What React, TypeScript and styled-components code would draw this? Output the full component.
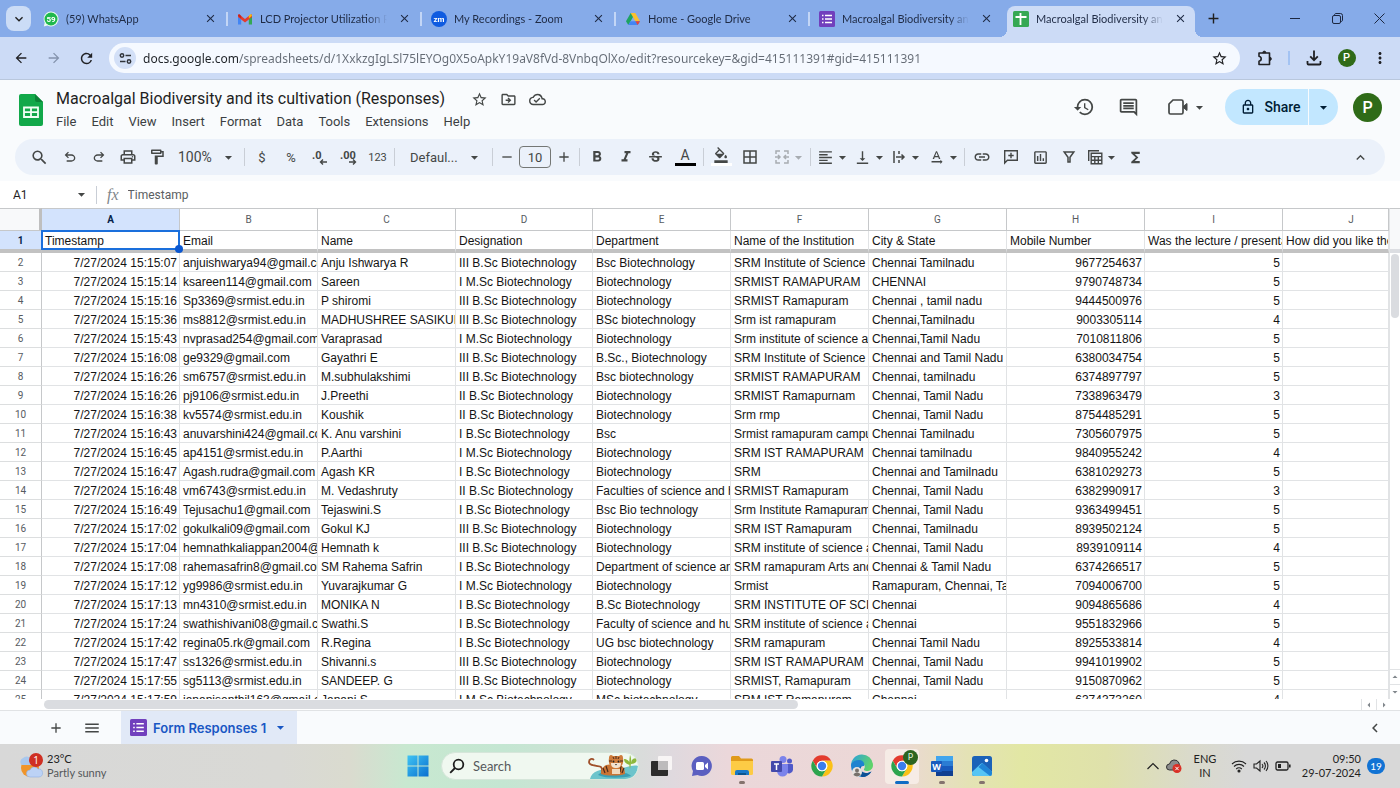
import React from 'react';
import styled, { createGlobalStyle } from 'styled-components';
import {
  MdAdd, MdArrowBack, MdArrowDropDown, MdArrowDropUp, MdArrowForward, MdArrowLeft, MdArrowRight, MdBorderAll,
  MdChevronLeft, MdClose, MdFormatAlignLeft, MdFormatBold, MdFormatColorFill, MdFormatItalic, MdFunctions,
  MdHistory, MdKeyboardArrowDown, MdKeyboardArrowUp, MdLink, MdMenu, MdMoreVert, MdOutlineCloudDone,
  MdOutlineComment, MdOutlineDriveFileMove,
  MdOutlineFormatPaint, MdOutlineInsertChart, MdOutlineLock, MdOutlinePrint, MdRefresh, MdRemove, MdSearch,
  MdStarBorder, MdStrikethroughS, MdTextRotationNone, MdVerticalAlignBottom,
} from 'react-icons/md';

const ui = 'Lato, "Open Sans", sans-serif';
const google = 'Roboto, "Liberation Sans", sans-serif';
const cell = '"Liberation Sans", Arial, sans-serif';

const GlobalStyle = createGlobalStyle`
  * { box-sizing: border-box; }
  body { margin: 0; font-family: ${google}; color: #1f1f1f; background: #fff; }
  button, input, select { font: inherit; color: inherit; border: 0; padding: 0; margin: 0; background: none; outline: 0; }
  button { cursor: pointer; display: inline-flex; align-items: center; justify-content: center; }
  svg { display: block; flex: none; }
`;

/* ---------- data ---------- */

const columns: [string, string, number][] = [
  ['A', 'Timestamp', 138],
  ['B', 'Email', 138],
  ['C', 'Name', 138],
  ['D', 'Designation', 137],
  ['E', 'Department', 138],
  ['F', 'Name of the Institution', 138],
  ['G', 'City & State', 138],
  ['H', 'Mobile Number', 138],
  ['I', 'Was the lecture / presentation', 138],
];

const rows: string[][] = [
  ['15:15:07', 'anjuishwarya94@gmail.com', 'Anju Ishwarya R', 'III B.Sc Biotechnology', 'Bsc Biotechnology', 'SRM Institute of Science', 'Chennai Tamilnadu', '9677254637', '5'],
  ['15:15:14', 'ksareen114@gmail.com', 'Sareen', 'I M.Sc Biotechnology', 'Biotechnology', 'SRMIST RAMAPURAM', 'CHENNAI', '9790748734', '5'],
  ['15:15:16', 'Sp3369@srmist.edu.in', 'P shiromi', 'III B.Sc Biotechnology', 'Biotechnology', 'SRMIST Ramapuram', 'Chennai , tamil nadu', '9444500976', '5'],
  ['15:15:36', 'ms8812@srmist.edu.in', 'MADHUSHREE SASIKUMAR', 'III B.Sc Biotechnology', 'BSc biotechnology', 'Srm ist ramapuram', 'Chennai,Tamilnadu', '9003305114', '4'],
  ['15:15:43', 'nvprasad254@gmail.com', 'Varaprasad', 'I M.Sc Biotechnology', 'Biotechnology', 'Srm institute of science and', 'Chennai,Tamil Nadu', '7010811806', '5'],
  ['15:16:08', 'ge9329@gmail.com', 'Gayathri E', 'III B.Sc Biotechnology', 'B.Sc., Biotechnology', 'SRM Institute of Science', 'Chennai and Tamil Nadu', '6380034754', '5'],
  ['15:16:26', 'sm6757@srmist.edu.in', 'M.subhulakshimi', 'III B.Sc Biotechnology', 'Bsc biotechnology', 'SRMIST RAMAPURAM', 'Chennai, tamilnadu', '6374897797', '5'],
  ['15:16:26', 'pj9106@srmist.edu.in', 'J.Preethi', 'II B.Sc Biotechnology', 'Biotechnology', 'SRMIST Ramapurnam', 'Chennai, Tamil Nadu', '7338963479', '3'],
  ['15:16:38', 'kv5574@srmist.edu.in', 'Koushik', 'II B.Sc Biotechnology', 'Biotechnology', 'Srm rmp', 'Chennai, Tamil Nadu', '8754485291', '5'],
  ['15:16:43', 'anuvarshini424@gmail.com', 'K. Anu varshini', 'I B.Sc Biotechnology', 'Bsc', 'Srmist ramapuram campus', 'Chennai Tamilnadu', '7305607975', '5'],
  ['15:16:45', 'ap4151@srmist.edu.in', 'P.Aarthi', 'I M.Sc Biotechnology', 'Biotechnology', 'SRM IST RAMAPURAM', 'Chennai tamilnadu', '9840955242', '4'],
  ['15:16:47', 'Agash.rudra@gmail.com', 'Agash KR', 'I B.Sc Biotechnology', 'Biotechnology', 'SRM', 'Chennai and Tamilnadu', '6381029273', '5'],
  ['15:16:48', 'vm6743@srmist.edu.in', 'M. Vedashruty', 'II B.Sc Biotechnology', 'Faculties of science and h', 'SRMIST Ramapuram', 'Chennai, Tamil Nadu', '6382990917', '3'],
  ['15:16:49', 'Tejusachu1@gmail.com', 'Tejaswini.S', 'I B.Sc Biotechnology', 'Bsc Bio technology', 'Srm Institute Ramapuram', 'Chennai, Tamil Nadu', '9363499451', '5'],
  ['15:17:02', 'gokulkali09@gmail.com', 'Gokul KJ', 'III B.Sc Biotechnology', 'Biotechnology', 'SRM IST Ramapuram', 'Chennai, Tamilnadu', '8939502124', '5'],
  ['15:17:04', 'hemnathkaliappan2004@gmail', 'Hemnath k', 'III B.Sc Biotechnology', 'Biotechnology', 'SRM institute of science and', 'Chennai, Tamil Nadu', '8939109114', '4'],
  ['15:17:08', 'rahemasafrin8@gmail.com', 'SM Rahema Safrin', 'I B.Sc Biotechnology', 'Department of science and', 'SRM ramapuram Arts and', 'Chennai & Tamil Nadu', '6374266517', '5'],
  ['15:17:12', 'yg9986@srmist.edu.in', 'Yuvarajkumar G', 'I M.Sc Biotechnology', 'Biotechnology', 'Srmist', 'Ramapuram, Chennai, Tamil', '7094006700', '5'],
  ['15:17:13', 'mn4310@srmist.edu.in', 'MONIKA N', 'I B.Sc Biotechnology', 'B.Sc Biotechnology', 'SRM INSTITUTE OF SCI', 'Chennai', '9094865686', '4'],
  ['15:17:24', 'swathishivani08@gmail.com', 'Swathi.S', 'I B.Sc Biotechnology', 'Faculty of science and hum', 'SRM institute of science and', 'Chennai', '9551832966', '5'],
  ['15:17:42', 'regina05.rk@gmail.com', 'R.Regina', 'I B.Sc Biotechnology', 'UG bsc biotechnology', 'SRM ramapuram', 'Chennai Tamil Nadu', '8925533814', '4'],
  ['15:17:47', 'ss1326@srmist.edu.in', 'Shivanni.s', 'III B.Sc Biotechnology', 'Biotechnology', 'SRM IST RAMAPURAM', 'Chennai, Tamil Nadu', '9941019902', '5'],
  ['15:17:55', 'sg5113@srmist.edu.in', 'SANDEEP. G', 'III B.Sc Biotechnology', 'Biotechnology', 'SRMIST, Ramapuram', 'Chennai, Tamil Nadu', '9150870962', '5'],
  ['15:17:59', 'jananisenthil163@gmail.com', 'Janani S', 'I M.Sc Biotechnology', 'MSc biotechnology', 'SRM IST Ramapuram', 'Chennai', '6374373260', '4'],
];

/* ---------- icons ---------- */

const Symbol24 = ({ d, size = 16 }: { d: string; size?: number }) => (
  <svg width={size} height={size} viewBox="0 -960 960 960" fill="currentColor"><path d={d} /></svg>
);
const UndoIcon = () => <Symbol24 d="M280-200v-80h284q63 0 109.5-40T720-420q0-60-46.5-100T564-560H312l104 104-56 56-200-200 200-200 56 56-104 104h252q97 0 166.5 63T800-420q0 94-69.5 157T564-200H280Z" />;
const RedoIcon = () => <Symbol24 d="M396-200q-97 0-166.5-63T160-420q0-94 69.5-157T396-640h252L544-744l56-56 200 200-200 200-56-56 104-104H396q-63 0-109.5 40T240-420q0 60 46.5 100T396-280h284v80H396Z" />;

const Decimal = ({ text, right }: { text: string; right?: boolean }) => (
  <svg width="18" height="18" viewBox="0 0 18 18" fill="none" stroke="currentColor" strokeWidth="1.4">
    <text x={right ? 0 : 1} y="11" fontFamily="Roboto, sans-serif" fontSize="11" fontWeight="700" fill="currentColor" stroke="none">{text}</text>
    {right ? <path d="M9 14h6M13 11.500l2.500 2.500L13 16.500" /> : <path d="M16 14h-6M12 11.500L9.500 14l2.500 2.500" />}
  </svg>
);
const MergeIcon = () => (
  <svg width="16" height="16" viewBox="0 0 16 16" fill="none" stroke="currentColor" strokeWidth="1.500">
    <path d="M6 2H2v3M10 2h4v3M6 14H2v-3M10 14h4v-3M1 8h5M4 6l2 2-2 2M15 8h-5M12 6l-2 2 2 2" />
  </svg>
);
const WrapIcon = () => (
  <svg width="16" height="16" viewBox="0 0 16 16" fill="none" stroke="currentColor" strokeWidth="1.500">
    <path d="M3 2v12M8 2v3M8 11v3M5 8h8M10.500 5.500L13 8l-2.500 2.500" />
  </svg>
);
const AddCommentIcon = () => (
  <svg width="16" height="16" viewBox="0 0 16 16" fill="none" stroke="currentColor" strokeWidth="1.400">
    <path d="M1.700 14V1.700h12.600v9.600H4.400zM8 3.800v5.400M5.300 6.500h5.400" />
  </svg>
);
const FunnelIcon = () => (
  <svg width="16" height="16" viewBox="0 0 16 16" fill="none" stroke="currentColor" strokeWidth="1.500">
    <path d="M3.200 3h9.600L9 8.200V13H7V8.200z" />
  </svg>
);
const TableViewIcon = () => (
  <svg width="16" height="16" viewBox="0 0 16 16" fill="none" stroke="currentColor" strokeWidth="1.400">
    <path d="M1.700 12V1.700H12M4.200 4.200h10.600v10.600H4.200zM4.200 7.600h10.600M4.200 11.200h10.600M7.800 7.600v7.200M11.300 7.600v7.200" />
  </svg>
);
const CameraIcon = () => (
  <svg width="20" height="20" viewBox="0 0 20 20" fill="none" stroke="currentColor" strokeWidth="1.700">
    <path d="M5 3h8.500a1.500 1.500 0 0 1 1.500 1.500v11a1.500 1.500 0 0 1-1.500 1.500h-11A1.500 1.500 0 0 1 1 15.500V7z" />
    <path d="M15.500 9.200L19 6.500v7l-3.500-2.700z" fill="currentColor" strokeWidth="1" />
  </svg>
);
const PuzzleIcon = () => (
  <svg width="18" height="18" viewBox="0 0 18 18" fill="none" stroke="currentColor" strokeWidth="1.600" strokeLinejoin="round">
    <path d="M3 4h10.500v11.500H3v-3.300q2.200-.4 2.200-2.400T3 7.300z" />
    <path d="M6.700 3.700a1.600 1.600 0 0 1 3.200 0zM13.800 8.200a1.600 1.600 0 0 1 0 3.200z" fill="currentColor" strokeWidth=".8" />
  </svg>
);
const DownloadIcon = () => (
  <svg width="18" height="18" viewBox="0 0 18 18" fill="none" stroke="currentColor" strokeWidth="1.800">
    <path d="M9 1.500v9.500M5.200 7.400L9 11.200l3.800-3.800M2.500 12v2.500q0 1 1 1h11q1 0 1-1V12" />
  </svg>
);
const FormsIcon = ({ size }: { size: number }) => (
  <svg width={size} height={size} viewBox="0 0 16 16">
    <rect width="16" height="16" rx="1.500" fill="#7140bd" />
    <path d="M3 4.500h1.500M3 8h1.500M3 11.500h1.500M6 4.500h7M6 8h7M6 11.500h7" stroke="#fff" strokeWidth="1.500" />
  </svg>
);
const SheetsLogo = () => (
  <svg width="24" height="32" viewBox="0 0 24 32">
    <path d="M2 0h14l8 8v22a2 2 0 0 1-2 2H2a2 2 0 0 1-2-2V2a2 2 0 0 1 2-2z" fill="#12a84a" />
    <path d="M16 0l8 8h-6a2 2 0 0 1-2-2z" fill="#0c8238" />
    <path d="M5 13.500h14v9.500H5zM5 18.200h14M12 13.500V23" fill="none" stroke="#f2fff6" strokeWidth="1.800" />
  </svg>
);
const SheetsFavicon = () => (
  <svg width="16" height="16" viewBox="0 0 16 16">
    <rect width="16" height="16" rx="1.500" fill="#34a853" />
    <path d="M2.500 6h11M7.500 2v12" stroke="#fff" strokeWidth="1.800" />
  </svg>
);
const WhatsAppIcon = () => (
  <svg width="16" height="16" viewBox="0 0 16 16">
    <path d="M8 .5a7.500 7.500 0 1 1-3.500 14.100L.8 15.400l.9-3.600A7.500 7.500 0 0 1 8 .5z" fill="#e9fbef" />
    <circle cx="8" cy="8" r="6.500" fill="#1fb84c" />
    <text x="8" y="10.800" textAnchor="middle" fontFamily="Roboto, sans-serif" fontSize="8" fontWeight="700" fill="#fff">59</text>
  </svg>
);
const GmailIcon = () => (
  <svg width="16" height="16" viewBox="0 0 16 16">
    <path d="M1 4v9.500h3.200V6.500z" fill="#4285f4" />
    <path d="M15 4v9.500h-3.200V6.500z" fill="#34a853" />
    <path d="M1 3.200L4.200 5 8 8l3.800-3L15 3.200V6l-7 5.500L1 6z" fill="#e33b2e" />
    <path d="M11.800 5l1.600-1.700Q15 3 15 4.800l-3.200 2.700z" fill="#fbbc04" />
    <path d="M4.200 5L2.600 3.300Q1 3 1 4.800l3.200 2.700z" fill="#c5221f" />
  </svg>
);
const ZoomIcon = () => (
  <svg width="16" height="16" viewBox="0 0 16 16">
    <circle cx="8" cy="8" r="8" fill="#0f5be0" />
    <text x="8" y="10.500" textAnchor="middle" fontFamily="Roboto, sans-serif" fontSize="8" fontWeight="700" fill="#fff">zm</text>
  </svg>
);
const DriveIcon = () => (
  <svg width="16" height="14" viewBox="-1 0 16 14">
    <path d="M4.700 1h4.600L4.600 9.200 2.300 13 0 9.200z" fill="#1ea362" />
    <path d="M4.700 1h4.600L14 9.200H9.400z" fill="#fbc02d" />
    <path d="M4.600 9.200H14L11.700 13H2.300z" fill="#4285f4" />
    <path d="M9.400 9.200H14L11.700 13z" fill="#ea4335" />
  </svg>
);
const TuneIcon = () => (
  <svg width="13" height="13" viewBox="0 0 13 13" fill="none" stroke="#30343a" strokeWidth="1.500">
    <circle cx="3" cy="3.500" r="1.700" /><path d="M6.500 3.500H12M1 9.500h5.500" /><circle cx="10" cy="9.500" r="1.700" />
  </svg>
);
const RestoreIcon = () => (
  <svg width="11" height="11" viewBox="0 0 11 11" fill="none" stroke="currentColor" strokeWidth="1">
    <rect x=".5" y="2.500" width="8" height="8" rx="1.500" /><path d="M2.500 2.500C2.500 1 3 .5 4 .5h4.500a2 2 0 0 1 2 2V7c0 1-.5 1.500-2 1.500" />
  </svg>
);
const ThinCross = () => (
  <svg width="11" height="11" viewBox="0 0 11 11" stroke="currentColor" strokeWidth="1"><path d="M.5.5l10 10M10.500.5l-10 10" /></svg>
);

const WeatherIcon = () => (
  <svg width="26" height="28" viewBox="0 0 26 28">
    <circle cx="12" cy="16" r="9" fill="#f0952b" />
    <path d="M4 13a4 4 0 0 1 1-7 5 5 0 0 1 8 1v6z" fill="#a9c8ee" />
    <path d="M12 25a3.500 3.500 0 0 1 0-7 4.500 4.500 0 0 1 8-1 4 4 0 0 1 1 8z" fill="#bcd2f5" stroke="#8fb0e4" strokeWidth=".6" />
    <circle cx="18" cy="8" r="7" fill="#cf2f22" />
    <text x="18" y="12" textAnchor="middle" fontFamily="Open Sans, sans-serif" fontSize="10" fill="#fff">1</text>
  </svg>
);
const WindowsIcon = () => (
  <svg width="22" height="22" viewBox="0 0 22 22">
    <defs><linearGradient id="win" x1="0" y1="0" x2="1" y2="1"><stop offset="0" stopColor="#3fc4f3" /><stop offset="1" stopColor="#0a6fd0" /></linearGradient></defs>
    <path d="M.5.500h10v10h-10zM11.500.500h10v10h-10zM.5 11.500h10v10h-10zM11.500 11.500h10v10h-10z" fill="url(#win)" />
  </svg>
);
const TigerArt = () => (
  <svg width="50" height="26" viewBox="0 0 50 26">
    <path d="M2 26C4 18 12 16 24 16c14 0 20-5 26-3-1 8-5 13-12 13z" fill="#6cc4cb" />
    <path d="M10 22c4-4 8-3 12-2h14c4 0 6 2 7 3-8 2-24 3-33-1z" fill="#3a9fb4" />
    <path d="M14 20C15 11 10 14 7 12.500 4 12 1 12 1 9c0-3 3-4 5-2" fill="none" stroke="#a0512b" strokeWidth="1.800" />
    <path d="M13 21c0-8 6-11 12-9 8-2 12 2 12 9-6 2-18 2-24 0z" fill="#c97433" />
    <path d="M15 15l2 5M18 13l2 6M33 13l-1 6M36 15l-2 5" stroke="#4a2a1c" strokeWidth="1.200" />
    <path d="M21 5c0-3 2-4 4-2h6c2-2 4-1 4 2 1 5-1 10-7 11-6-1-8-6-7-11z" fill="#cf7c3c" />
    <path d="M23 10h10c0 4-2 5-5 5s-5-1-5-5z" fill="#f3e2cf" />
    <path d="M28 3v3M25 4l1 2M31 4l-1 2M21 8h3M35 8h-3" stroke="#4a2a1c" />
    <circle cx="25.500" cy="8.500" r=".9" fill="#222" /><circle cx="30.500" cy="8.500" r=".9" fill="#222" /><path d="M27 11h2l-1 1.500z" fill="#222" />
    <path d="M24 16h8v5h-8z" fill="#f0d9bd" />
    <path d="M42 16c-1-4-1-8 0-14 2 4 1 9 0 14zM42 12c-4-1-6-3-6-6 4 0 6 3 6 6zM43 11c0-4 2-6 6-6 0 4-2 6-6 6z" fill="#8db83c" />
  </svg>
);
const TaskViewIcon = () => (
  <svg width="24" height="24" viewBox="0 0 24 24">
    <rect x="8" y="2" width="14" height="14" rx="1" fill="#f8f5f5" />
    <rect x="1" y="7" width="17" height="15" rx="1" fill="#2c2c2c" />
    <path d="M8 7h10v9H8z" fill="#bdbbbc" />
  </svg>
);
const ChatIcon = () => (
  <svg width="22" height="22" viewBox="0 0 22 22">
    <path d="M11 1a10 10 0 1 1-4.500 19L1 21l1-5A10 10 0 0 1 11 1z" fill="#5b5fc0" />
    <rect x="5" y="7" width="8" height="8" rx="1.500" fill="#fff" /><path d="M14 10l3-2.500v7L14 12z" fill="#fff" />
  </svg>
);
const FolderIcon = () => (
  <svg width="24" height="22" viewBox="0 0 24 22">
    <path d="M1 2.500A1.500 1.500 0 0 1 2.500 1H9l2 2.500h10.500A1.500 1.500 0 0 1 23 5v5H1z" fill="#e09a1a" />
    <path d="M1 6h22v12.500a1.500 1.500 0 0 1-1.500 1.500h-19A1.500 1.500 0 0 1 1 18.500z" fill="#fdcb45" />
    <path d="M5 20v-3a2 2 0 0 1 2-2h10a2 2 0 0 1 2 2v3z" fill="#1a78c8" /><path d="M8 18h8v2H8z" fill="#0c558f" />
  </svg>
);
const TeamsIcon = () => (
  <svg width="24" height="22" viewBox="0 0 24 22">
    <circle cx="19.500" cy="6" r="2.500" fill="#5059c9" /><circle cx="13" cy="4.500" r="3.500" fill="#7b83eb" />
    <path d="M15 9h7a1 1 0 0 1 1 1v5a4 4 0 0 1-7 2z" fill="#5059c9" />
    <path d="M7 9h10a1 1 0 0 1 1 1v6a5.500 5.500 0 0 1-11 0z" fill="#7b83eb" />
    <rect x="1" y="6" width="11" height="11" rx="1" fill="#4349ab" /><path d="M4 9h5M6.500 9v6" stroke="#fff" strokeWidth="1.500" />
  </svg>
);
const ChromeLogo = () => {
  const arm = 'M12 6.700H21.200A10.600 10.600 0 0 0 2.800 6.700L7.400 14.650A5.300 5.300 0 0 1 12 6.700Z';
  return (
    <svg width="24" height="24" viewBox="0 0 24 24">
      <circle cx="12" cy="12" r="9" fill="#fff" />
      <path d={arm} fill="#e33b2e" />
      <path d={arm} fill="#fbc116" transform="rotate(120 12 12)" />
      <path d={arm} fill="#2da44e" transform="rotate(240 12 12)" />
      <circle cx="12" cy="12" r="5.300" fill="#fff" /><circle cx="12" cy="12" r="4.200" fill="#3b7ded" />
    </svg>
  );
};
const EdgeIcon = () => (
  <svg width="24" height="24" viewBox="0 0 24 24">
    <defs><linearGradient id="edge" x1="0" y1="0" x2="1" y2=".4"><stop offset="0" stopColor="#2a9fe0" /><stop offset="1" stopColor="#5fd36b" /></linearGradient></defs>
    <path d="M1 12a11 11 0 0 1 22-1c0 4-3 6-6.500 6-2 0-3-1-2.500-2 2-3 0-6-4-6-5 0-8 3-9 3z" fill="url(#edge)" />
    <path d="M1 12c0-4 4-6 8-6 4 0 6 3 5 6-4-1-5 6 1 7 3 .5 5-.5 6.500-1.500A11 11 0 0 1 1 12z" fill="#1d83d0" />
    <path d="M11 12c-2 4 1 7 5 7 2 0 4-.7 5.500-1.500A11 11 0 0 1 12 23c-4-2-5-9-1-11z" fill="#0d4f94" />
    <circle cx="7" cy="18" r="5" fill="#e6e3e0" /><circle cx="7" cy="16.500" r="2" fill="#77716c" /><path d="M3.500 21c0-3.500 7-3.500 7 0a5 5 0 0 1-7 0z" fill="#77716c" />
  </svg>
);
const WordIcon = () => (
  <svg width="24" height="22" viewBox="0 0 24 22">
    <rect x="6" y="1" width="17" height="20" rx="1.500" fill="#2b7cd3" /><path d="M6 1h17v5H6z" fill="#41a5ee" /><path d="M6 11h17v5H6z" fill="#185abd" /><path d="M6 16h17v5H6z" fill="#103f91" />
    <rect x="1" y="6" width="11" height="11" rx="1" fill="#185abd" />
    <text x="6.500" y="14.700" textAnchor="middle" fontFamily="Open Sans, sans-serif" fontSize="9" fontWeight="700" fill="#fff">W</text>
  </svg>
);
const PhotosIcon = () => (
  <svg width="22" height="22" viewBox="0 0 22 22">
    <rect x="1" y="1" width="20" height="20" rx="2.500" fill="#1b62b8" />
    <path d="M1 17l8.500-8q1.500-1.300 3 0L21 17v1.500a2.500 2.500 0 0 1-2.500 2.500h-15A2.500 2.500 0 0 1 1 18.500z" fill="#56c5f4" />
    <path d="M11 8.500l1.500.5L21 17v1.500a2.500 2.500 0 0 1-2 2.400L7.500 12z" fill="#1f84d6" />
    <circle cx="15.500" cy="5.500" r="1.800" fill="#fff" />
  </svg>
);
const CloudErrorIcon = () => (
  <svg width="16" height="14" viewBox="0 0 16 14">
    <path d="M3.500 11a3 3 0 0 1 0-6A5 5 0 0 1 13 4l1 7z" fill="#8b8b8b" stroke="#333" />
    <circle cx="11" cy="9.500" r="4.500" fill="#d92f25" /><path d="M9.300 7.800l3.400 3.400M12.700 7.800l-3.400 3.400" stroke="#fff" />
  </svg>
);
const WifiIcon = () => (
  <svg width="16" height="14" viewBox="0 0 16 14" fill="none" stroke="#222" strokeWidth="1.100">
    <path d="M1 5a10 10 0 0 1 14 0M3 7.500a7 7 0 0 1 10 0M5.200 10a4 4 0 0 1 5.600 0" /><circle cx="8" cy="12" r="1" fill="#222" />
  </svg>
);
const VolumeIcon = () => (
  <svg width="16" height="14" viewBox="0 0 16 14" fill="none" stroke="#222" strokeWidth="1.100">
    <path d="M1 5h2.500L7 2v10L3.500 9H1zM9 5a3 3 0 0 1 0 4M11 3.500a5 5 0 0 1 0 7M13 2a7.500 7.500 0 0 1 0 10" />
  </svg>
);
const BatteryIcon = () => (
  <svg width="16" height="14" viewBox="0 0 16 14" fill="none" stroke="#222" strokeWidth="1.300">
    <rect x="1" y="3" width="12" height="8" rx="1.500" /><path d="M3 5h3v4H3z" fill="#222" stroke="none" /><path d="M14.800 5.500v3" strokeWidth="1.600" />
  </svg>
);
const Lens = () => (
  <svg width="16" height="16" viewBox="0 0 16 16" fill="none" stroke="#1d1d1d" strokeWidth="1.800">
    <circle cx="9.500" cy="6.500" r="4.800" /><path d="M6 10l-4.800 4.800" />
  </svg>
);

/* ---------- browser chrome ---------- */

const Screen = styled.div`
  display: flex;
  flex-direction: column;
  height: 100vh;
  min-width: 1200px;
  overflow: hidden;
`;
const TabStrip = styled.header`
  display: flex;
  flex: none;
  height: 37px;
  background: #86abe9;
  font-family: ${ui};
  font-size: 11px;
`;
const TabSearch = styled.button`
  width: 25px;
  height: 25px;
  margin: 6px 3px 0 6px;
  border-radius: 8px;
  background: #cbdcf6;
`;
const Tab = styled.div<{ $active?: boolean; $divider?: boolean }>`
  position: relative;
  display: flex;
  align-items: center;
  flex: 0 1 ${p => (p.$active ? 188 : 194)}px;
  min-width: 0;
  height: ${p => (p.$active ? 31 : 37)}px;
  margin: ${p => (p.$active ? '6px 3px 0' : 0)};
  padding: 0 ${p => (p.$active ? '6px 6px 6px' : '9px 0 9px')};
  background: ${p => (p.$active ? '#ccdbf6' : 'none')};
  border-radius: 8px 8px 0 0;
  color: #1f2b45;
  ${p => p.$divider && `
    &::after { content: ''; position: absolute; right: 0; top: 12px; width: 2px; height: 14px; background: #c3d6f6; }
  `}
  ${p => p.$active && `
    &::before, &::after { content: ''; position: absolute; bottom: 0; width: 8px; height: 8px; }
    &::before { left: -8px; background: radial-gradient(circle at 0 0, transparent 8px, #ccdbf6 8px); }
    &::after { right: -8px; background: radial-gradient(circle at 100% 0, transparent 8px, #ccdbf6 8px); }
  `}
`;
const TabTitle = styled.button`
  flex: 1;
  min-width: 0;
  justify-content: flex-start;
  gap: 7px;
  height: 24px;
  overflow: hidden;
  white-space: nowrap;
  mask-image: linear-gradient(to right, #000 calc(100% - 20px), transparent 100%);
`;
const TabClose = styled.button`
  width: 18px;
  height: 18px;
  margin-left: 8px;
`;
const NewTab = styled.button`
  width: 30px;
`;
const WindowControls = styled.div`
  display: flex;
  margin-left: auto;
  color: #1c2740;
  button { width: 42px; }
`;
const AddressRow = styled.div`
  display: flex;
  align-items: center;
  flex: none;
  height: 43px;
  padding: 0 4px;
  background: #ccdbf6;
  border-bottom: 1px solid #b9c7dc;
  color: #202124;
`;
const NavButton = styled.button<{ $dim?: boolean; $w?: number }>`
  width: ${p => p.$w ?? 33}px;
  height: 30px;
  color: ${p => (p.$dim ? '#8493ad' : 'inherit')};
`;
const Omnibox = styled.div`
  display: flex;
  align-items: center;
  flex: 1;
  height: 30px;
  margin: 0 8px 0 6px;
  padding: 0 6px 0 5px;
  border-radius: 15px;
  background: #f5f9ff;
`;
const SiteInfo = styled.button`
  width: 22px;
  height: 22px;
  border-radius: 50%;
  background: #d3e0f7;
`;
const UrlInput = styled.input`
  flex: 1;
  min-width: 0;
  height: 24px;
  margin-left: 7px;
  font-family: "Noto Sans", "Open Sans", sans-serif;
  font-size: 12px;
  color: transparent;
  background: linear-gradient(to right, #1f2328 95px, #646b75 95px);
  background-clip: text;
`;
const Rule = styled.span`
  width: 2px;
  height: 14px;
  margin: 0 7px;
  background: #a3c3f3;
`;
const avatarLook = `
  border-radius: 50%;
  background: #2f6b18;
  color: #fff;
  font-weight: 500;
  text-align: center;
`;
const SmallAvatar = styled.span`
  ${avatarLook}
  width: 18px;
  height: 18px;
  font-size: 11px;
  line-height: 18px;
`;
const Account = styled.button`
  && {
    ${avatarLook}
    width: 29px;
    height: 29px;
    margin-right: 3px;
    font-size: 16px;
  }
`;

const tabs: { icon: React.ReactNode; title: string; active?: boolean }[] = [
  { icon: <WhatsAppIcon />, title: '(59) WhatsApp' },
  { icon: <GmailIcon />, title: 'LCD Projector Utilization Re' },
  { icon: <ZoomIcon />, title: 'My Recordings - Zoom' },
  { icon: <DriveIcon />, title: 'Home - Google Drive' },
  { icon: <FormsIcon size={16} />, title: 'Macroalgal Biodiversity and' },
  { icon: <SheetsFavicon />, title: 'Macroalgal Biodiversity and', active: true },
];

/* ---------- sheets header ---------- */

const AppHeader = styled.header`
  flex: none;
  padding: 8px 15px 6px;
  background: #f9fbfd;
`;
const HeaderRow = styled.div`
  display: flex;
  height: 51px;
`;
const Logo = styled.a`
  margin: 6px 9px 0 4px;
`;
const TitleBlock = styled.div`
  display: flex;
  flex-direction: column;
`;
const TitleLine = styled.div`
  display: flex;
  align-items: center;
  height: 22px;
  padding-left: 4px;
  color: #444746;
  button { width: 29px; height: 22px; }
`;
const TitleInput = styled.input`
  width: 404px;
  margin-right: 5px;
  font-size: 16px;
  line-height: 22px;
  color: #1f1f1f;
`;
const MenuBar = styled.nav`
  display: flex;
  gap: 1px;
  height: 22px;
  font-size: 13px;
  color: #3c3f43;
  button { padding: 0 4px; margin-right: 6px; }
`;
const HeaderActions = styled.div`
  display: flex;
  align-items: center;
  margin: 1px 0 0 auto;
  height: 36px;
  color: #444746;
  > button { width: 45px; height: 36px; }
`;
const CameraButton = styled.button`
  && { width: 60px; margin: 0 14px 0 0; padding-left: 14px; gap: 3px; }
`;
const ShareGroup = styled.div`
  display: flex;
  gap: 1px;
  height: 36px;
  margin-right: 15px;
  color: #001d35;
  font-size: 14px;
  font-weight: 500;
  button { background: #c2e7ff; }
`;
const ShareMain = styled.button`
  width: 83px;
  gap: 8px;
  padding-left: 8px;
  border-radius: 18px 0 0 18px;
`;
const ShareMore = styled.button`
  width: 29px;
  border-radius: 0 18px 18px 0;
`;
const Toolbar = styled.div`
  display: flex;
  align-items: center;
  gap: 1px;
  height: 36px;
  padding: 0 11px 0 8px;
  border-radius: 18px;
  background: #ebf1fa;
  color: #444746;
  font-size: 13px;
`;
const Tool = styled.button<{ $w?: number; $dim?: boolean; $small?: boolean }>`
  flex: none;
  width: ${p => p.$w ?? 28}px;
  height: 28px;
  opacity: ${p => (p.$dim ? 0.4 : 1)};
  font-size: ${p => (p.$small ? 11 : 13)}px;
`;
const MenuTool = styled(Tool)`
  width: ${p => p.$w ?? 36}px;
  justify-content: flex-start;
  padding-left: ${p => (p.$w ? 9 : 3)}px;
`;
const Divider = styled.span`
  width: 1px;
  height: 18px;
  margin: 0 2px;
  background: #c9ced6;
`;
const Swatch = styled.span<{ $color: string }>`
  display: flex;
  flex-direction: column;
  align-items: center;
  width: 21px;
  height: 24px;
  margin-bottom: 6px;
  padding-top: 5px;
  border-bottom: 3px solid ${p => p.$color};
  font-size: 14px;
  line-height: 17px;
`;
const SelectWrap = styled.span<{ $w: number; $inset?: boolean }>`
  display: flex;
  align-items: center;
  width: ${p => p.$w}px;
  height: 28px;
  padding: ${p => (p.$inset ? '0 6px 0 12px' : '0 4px 0 6px')};
  font-size: ${p => (p.$inset ? 13 : 14)}px;
  select { flex: 1; min-width: 0; appearance: none; cursor: pointer; }
`;
const SizeInput = styled.input`
  flex: none;
  width: 32px;
  height: 22px;
  border: 1px solid #747775;
  border-radius: 4px;
  text-align: center;
`;
const Push = styled.span`
  margin-left: auto;
`;

/* ---------- formula bar ---------- */

const FormulaBar = styled.div`
  display: flex;
  align-items: center;
  flex: none;
  height: 27px;
  color: #444746;
  font-size: 12px;
`;
const NameBox = styled.input`
  width: 73px;
  padding-left: 13px;
  color: #1f1f1f;
`;
const FormulaDivider = styled(Divider)`
  margin: 0 2px 0 6px;
`;
const FxMark = styled.span`
  margin: 0 9px 0 8px;
  font-family: "Liberation Serif", serif;
  font-style: italic;
  font-size: 16px;
  color: #80868b;
`;
const FormulaInput = styled.input`
  flex: 1;
  color: #5a5e62;
`;

/* ---------- grid ---------- */

const GridArea = styled.main`
  display: flex;
  flex: 1;
  min-height: 0;
`;
const GridView = styled.div`
  position: relative;
  flex: 1;
  min-width: 0;
  overflow: hidden;
`;
const Sheet = styled.table`
  width: 100%;
  table-layout: fixed;
  border-collapse: separate;
  border-spacing: 0;
  font-family: ${cell};
  font-size: 12px;
  line-height: 15px;
  color: #141414;
`;
const ColumnHead = styled.th<{ $selected?: boolean; $corner?: boolean }>`
  height: 23px;
  padding: 0;
  border: solid #c6c8ca;
  border-width: 1px 1px 1px 0;
  background: ${p => (p.$selected ? '#d3e3fd' : p.$corner ? '#f8f9fa' : '#fff')};
  color: ${p => (p.$selected ? '#041e49' : '#575b5f')};
  font-family: ${google};
  font-size: 10px;
  font-weight: ${p => (p.$selected ? 700 : 400)};
  ${p => p.$corner && 'border-right: 3px solid #bfbfbf;'}
`;
const LastHead = styled(ColumnHead)`
  padding-left: 31px;
`;
const RowHead = styled.th<{ $selected?: boolean }>`
  padding: 0;
  border: solid #dcdedf;
  border-width: 0 1px 1px 0;
  border-right-color: #c6c8ca;
  background: ${p => (p.$selected ? '#d3e3fd' : '#fff')};
  color: ${p => (p.$selected ? '#041e49' : '#575b5f')};
  font-family: ${google};
  font-size: 10px;
  font-weight: ${p => (p.$selected ? 700 : 400)};
`;
const Cell = styled.td<{ $end?: boolean }>`
  padding: 3px 2px 0 3px;
  border: solid #e1e3e5;
  border-width: 0 1px 1px 0;
  overflow: hidden;
  white-space: nowrap;
  text-align: ${p => (p.$end ? 'right' : 'left')};
`;
const FrozenRow = styled.tr`
  height: 22px;
  th, td { border-bottom: 4px solid #c2c2c2; }
`;
const Selection = styled.div`
  position: absolute;
  left: 41px;
  top: 22px;
  width: 139px;
  height: 20px;
  border: 2px solid #1a6fdc;
  &::after {
    content: '';
    position: absolute;
    right: -5px;
    bottom: -5px;
    width: 8px;
    height: 8px;
    border-radius: 50%;
    background: #0b57d0;
  }
`;
const VerticalRail = styled.div`
  display: flex;
  flex-direction: column;
  flex: none;
  width: 11px;
  border-top: 1px solid #c6c8ca;
  border-left: 1px solid #e1e3e5;
`;
const RailCap = styled.span`
  height: 44px;
  background: #f8f9fa;
  border-bottom: 4px solid #dcdee2;
`;
const VerticalThumb = styled.span`
  width: 8px;
  height: 64px;
  margin: 1px 1px auto;
  border-radius: 4px;
  background: #dadce0;
`;
const ScrollStep = styled.button<{ $side?: boolean }>`
  width: ${p => (p.$side ? 15 : 10)}px;
  height: ${p => (p.$side ? 11 : 15)}px;
  border: solid #e1e3e5;
  border-width: ${p => (p.$side ? '0 0 0 1px' : '1px 0 0')};
  color: #80868b;
`;
const HorizontalRail = styled.div`
  display: flex;
  align-items: center;
  flex: none;
  height: 12px;
  padding: 0 9px 0 44px;
  border-bottom: 1px solid #e1e3e5;
`;
const HorizontalThumb = styled.span`
  width: 56%;
  height: 9px;
  margin-right: auto;
  border-radius: 5px;
  background: #dadce0;
`;

/* ---------- sheet tabs ---------- */

const SheetBar = styled.footer`
  display: flex;
  align-items: center;
  flex: none;
  height: 33px;
  padding: 0 16px 0 38px;
  background: #f9fbfd;
  color: #444746;
  > button { width: 36px; height: 28px; }
  > button:last-child { width: 18px; margin-left: auto; }
`;
const SheetTab = styled.button`
  && {
    justify-content: flex-start;
    width: 176px;
    height: 33px;
    margin-left: 11px;
    padding-left: 9px;
    gap: 6px;
    background: #e1e9f7;
    color: #1957c4;
    font-family: Inter, ${google};
    font-size: 13px;
    font-weight: 600;
  }
`;

/* ---------- taskbar ---------- */

const Taskbar = styled.footer`
  display: grid;
  grid-template-columns: 1fr auto 1fr;
  align-items: center;
  flex: none;
  height: 44px;
  font-family: ${ui};
  font-size: 11px;
  line-height: 14px;
  color: #1f1f1f;
  background: linear-gradient(to right, #d8d8d8 0, #d9d9d5 20%, #dadbcf 25%, #c8e8d0 29%, #c4e6d2 36%, #cfe1d5 42%, #dfd9de 48%, #ebd7da 52%, #ecd8d6 64%, #e4e2b6 69%, #e2e7a4 73%, #dfe1ab 79%, #dadacb 85%, #d8d8d8 89%, #d8d8d8 100%);
`;
const Weather = styled.button`
  justify-self: start;
  gap: 3px;
  padding-left: 18px;
  text-align: left;
  span { display: block; }
  span span:last-child { color: #54575a; }
`;
const Pinned = styled.div`
  display: flex;
  align-items: center;
`;
const AppButton = styled.button<{ $open?: boolean; $focused?: boolean }>`
  position: relative;
  width: ${p => (p.$focused ? 34 : 40)}px;
  height: 35px;
  margin: ${p => (p.$focused ? '0 3px' : 0)};
  border-radius: 4px;
  background: ${p => (p.$focused ? '#f6ece6' : 'none')};
  &::after {
    content: '';
    display: ${p => (p.$open || p.$focused ? 'block' : 'none')};
    position: absolute;
    bottom: 0;
    left: calc(50% - ${p => (p.$focused ? 7 : 3)}px);
    width: ${p => (p.$focused ? 14 : 6)}px;
    height: 3px;
    border-radius: 2px;
    background: ${p => (p.$focused ? '#0f6cc4' : '#84736e')};
  }
`;
const Profile = styled.span`
  position: absolute;
  right: 1px;
  top: 1px;
  width: 15px;
  height: 15px;
  border-radius: 50%;
  background: #2c6420;
  color: #dfeedd;
  font-size: 9px;
`;
const SearchBox = styled.label`
  display: flex;
  align-items: center;
  gap: 8px;
  width: 198px;
  height: 28px;
  margin: 0 3px;
  padding: 0 0 0 7px;
  border-radius: 14px;
  background: #f0f8f0;
  border: 1px solid #d6e6da;
  font-size: 13px;
  overflow: hidden;
  input { flex: 1; min-width: 0; }
  input::placeholder { color: #56595c; opacity: 1; }
`;
const Tray = styled.div`
  display: flex;
  align-items: center;
  justify-self: end;
  padding-right: 15px;
`;
const TrayIcons = styled.button`
  gap: 6px;
`;
const Language = styled.button`
  width: 46px;
  flex-direction: column;
  margin-right: 3px;
`;
const Clock = styled.button`
  width: 70px;
  flex-direction: column;
  align-items: flex-end;
  margin: 0 6px 0 0;
`;
const Count = styled.span`
  width: 18px;
  height: 16px;
  border-radius: 8px;
  background: #1173d4;
  color: #fff;
  font-size: 10px;
  line-height: 16px;
  text-align: center;
`;

const Caret = () => <MdArrowDropDown size={17} />;

export default function App() {
  return (
    <Screen>
      <GlobalStyle />
      <TabStrip>
        <TabSearch aria-label="Search tabs"><MdKeyboardArrowDown size={16} /></TabSearch>
        {tabs.map((t, i) => (
          <Tab key={i} $active={t.active} $divider={i < 4}>
            <TabTitle>{t.icon}{t.title}</TabTitle>
            <TabClose aria-label="Close tab"><MdClose size={13} /></TabClose>
          </Tab>
        ))}
        <NewTab aria-label="New tab"><MdAdd size={17} /></NewTab>
        <WindowControls>
          <button aria-label="Minimize"><svg width="10" height="1"><rect width="10" height="1" fill="currentColor" /></svg></button>
          <button aria-label="Restore"><RestoreIcon /></button>
          <button aria-label="Close"><ThinCross /></button>
        </WindowControls>
      </TabStrip>
      <AddressRow>
        <NavButton aria-label="Back"><MdArrowBack size={16} /></NavButton>
        <NavButton aria-label="Forward" $dim><MdArrowForward size={16} /></NavButton>
        <NavButton aria-label="Reload"><MdRefresh size={17} /></NavButton>
        <Omnibox>
          <SiteInfo aria-label="Site information"><TuneIcon /></SiteInfo>
          <UrlInput aria-label="Address" readOnly value="docs.google.com/spreadsheets/d/1XxkzgIgLSl75lEYOg0X5oApkY19aV8fVd-8VnbqOlXo/edit?resourcekey=&gid=415111391#gid=415111391" />
          <NavButton aria-label="Bookmark" $w={30}><MdStarBorder size={17} /></NavButton>
        </Omnibox>
        <NavButton aria-label="Extensions"><PuzzleIcon /></NavButton>
        <Rule />
        <NavButton aria-label="Downloads"><DownloadIcon /></NavButton>
        <NavButton aria-label="Profile"><SmallAvatar>P</SmallAvatar></NavButton>
        <NavButton aria-label="Menu"><MdMoreVert size={18} /></NavButton>
      </AddressRow>

      <AppHeader>
        <HeaderRow>
          <Logo href="#" aria-label="Sheets home"><SheetsLogo /></Logo>
          <TitleBlock>
            <TitleLine>
              <TitleInput aria-label="Document title" defaultValue="Macroalgal Biodiversity and its cultivation (Responses)" />
              <button aria-label="Star"><MdStarBorder size={17} /></button>
              <button aria-label="Move"><MdOutlineDriveFileMove size={17} /></button>
              <button aria-label="Saved to Drive"><MdOutlineCloudDone size={17} /></button>
            </TitleLine>
            <MenuBar>
              {['File', 'Edit', 'View', 'Insert', 'Format', 'Data', 'Tools', 'Extensions', 'Help'].map(m => <button key={m}>{m}</button>)}
            </MenuBar>
          </TitleBlock>
          <HeaderActions>
            <button aria-label="Version history"><MdHistory size={22} /></button>
            <button aria-label="Comments"><MdOutlineComment size={21} /></button>
            <CameraButton aria-label="Join a call"><CameraIcon /><Caret /></CameraButton>
            <ShareGroup>
              <ShareMain><MdOutlineLock size={16} />Share</ShareMain>
              <ShareMore aria-label="Sharing options"><Caret /></ShareMore>
            </ShareGroup>
            <Account>P</Account>
          </HeaderActions>
        </HeaderRow>
        <Toolbar>
          <Tool $w={32} aria-label="Search the menus"><MdSearch size={19} /></Tool>
          <Tool aria-label="Undo"><UndoIcon /></Tool>
          <Tool aria-label="Redo"><RedoIcon /></Tool>
          <Tool aria-label="Print"><MdOutlinePrint size={18} /></Tool>
          <Tool aria-label="Paint format"><MdOutlineFormatPaint size={18} /></Tool>
          <SelectWrap $w={69}><select aria-label="Zoom"><option>100%</option></select><Caret /></SelectWrap>
          <Divider />
          <Tool>$</Tool>
          <Tool>%</Tool>
          <Tool aria-label="Decrease decimal places"><Decimal text=".0" /></Tool>
          <Tool aria-label="Increase decimal places"><Decimal text=".00" right /></Tool>
          <Tool $w={27} $small>123</Tool>
          <Divider />
          <SelectWrap $w={91} $inset><select aria-label="Font"><option>Defaul...</option></select><Caret /></SelectWrap>
          <Divider />
          <Tool $w={22} aria-label="Decrease font size"><MdRemove size={16} /></Tool>
          <SizeInput aria-label="Font size" defaultValue="10" />
          <Tool $w={24} aria-label="Increase font size"><MdAdd size={16} /></Tool>
          <Divider />
          <Tool aria-label="Bold"><MdFormatBold size={18} /></Tool>
          <Tool aria-label="Italic"><MdFormatItalic size={18} /></Tool>
          <Tool aria-label="Strikethrough"><MdStrikethroughS size={17} /></Tool>
          <Tool $w={30} aria-label="Text color"><Swatch $color="#000">A</Swatch></Tool>
          <Divider />
          <Tool aria-label="Fill color"><Swatch $color="#fff"><MdFormatColorFill size={16} /></Swatch></Tool>
          <Tool aria-label="Borders"><MdBorderAll size={18} /></Tool>
          <MenuTool $w={42} $dim aria-label="Merge cells"><MergeIcon /><Caret /></MenuTool>
          <Divider />
          <MenuTool aria-label="Horizontal align"><MdFormatAlignLeft size={17} /><Caret /></MenuTool>
          <MenuTool aria-label="Vertical align"><MdVerticalAlignBottom size={17} /><Caret /></MenuTool>
          <MenuTool aria-label="Text wrapping"><WrapIcon /><Caret /></MenuTool>
          <MenuTool aria-label="Text rotation"><MdTextRotationNone size={17} /><Caret /></MenuTool>
          <Divider />
          <Tool aria-label="Insert link"><MdLink size={18} /></Tool>
          <Tool aria-label="Insert comment"><AddCommentIcon /></Tool>
          <Tool aria-label="Insert chart"><MdOutlineInsertChart size={17} /></Tool>
          <Tool aria-label="Create a filter"><FunnelIcon /></Tool>
          <MenuTool aria-label="Filter views"><TableViewIcon /><Caret /></MenuTool>
          <Tool aria-label="Functions"><MdFunctions size={17} /></Tool>
          <Push><Tool aria-label="Hide the menus"><MdKeyboardArrowUp size={17} /></Tool></Push>
        </Toolbar>
      </AppHeader>

      <FormulaBar>
        <NameBox aria-label="Name box" defaultValue="A1" />
        <button aria-label="Named ranges"><Caret /></button>
        <FormulaDivider />
        <FxMark>fx</FxMark>
        <FormulaInput aria-label="Formula" defaultValue="Timestamp" />
      </FormulaBar>

      <GridArea>
        <GridView>
          <Sheet>
            <colgroup>
              <col width={42} />
              {columns.map(([c, , w]) => <col key={c} width={w} />)}
              <col />
            </colgroup>
            <thead>
              <tr>
                <ColumnHead $corner />
                {columns.map(([c]) => <ColumnHead key={c} $selected={c === 'A'}>{c}</ColumnHead>)}
                <LastHead>J</LastHead>
              </tr>
            </thead>
            <tbody>
              <FrozenRow>
                <RowHead $selected>1</RowHead>
                {columns.map(([c, label]) => <Cell key={c}>{label}</Cell>)}
                <Cell>How did you like the</Cell>
              </FrozenRow>
              {rows.map((r, i) => (
                <tr key={i}>
                  <RowHead>{i + 2}</RowHead>
                  {r.map((v, c) => <Cell key={c} $end={c === 0 || c > 6}>{c === 0 ? `7/27/2024 ${v}` : v}</Cell>)}
                  <Cell />
                </tr>
              ))}
            </tbody>
          </Sheet>
          <Selection />
        </GridView>
        <VerticalRail>
          <RailCap />
          <VerticalThumb />
          <ScrollStep aria-label="Scroll up"><MdArrowDropUp size={12} /></ScrollStep>
          <ScrollStep aria-label="Scroll down"><MdArrowDropDown size={12} /></ScrollStep>
        </VerticalRail>
      </GridArea>
      <HorizontalRail>
        <HorizontalThumb />
        <ScrollStep $side aria-label="Scroll left"><MdArrowLeft size={12} /></ScrollStep>
        <ScrollStep $side aria-label="Scroll right"><MdArrowRight size={12} /></ScrollStep>
      </HorizontalRail>

      <SheetBar>
        <button aria-label="Add sheet"><MdAdd size={16} /></button>
        <button aria-label="All sheets"><MdMenu size={18} /></button>
        <SheetTab><FormsIcon size={17} />Form Responses 1<Caret /></SheetTab>
        <button aria-label="Show side panel"><MdChevronLeft size={18} /></button>
      </SheetBar>

      <Taskbar>
        <Weather><WeatherIcon /><span><span>23°C</span><span>Partly sunny</span></span></Weather>
        <Pinned>
          <AppButton aria-label="Start"><WindowsIcon /></AppButton>
          <SearchBox><Lens /><input aria-label="Search" placeholder="Search" /><TigerArt /></SearchBox>
          <AppButton aria-label="Task view"><TaskViewIcon /></AppButton>
          <AppButton aria-label="Chat"><ChatIcon /></AppButton>
          <AppButton aria-label="File Explorer" $open><FolderIcon /></AppButton>
          <AppButton aria-label="Teams"><TeamsIcon /></AppButton>
          <AppButton aria-label="Chrome"><ChromeLogo /></AppButton>
          <AppButton aria-label="Edge"><EdgeIcon /></AppButton>
          <AppButton aria-label="Chrome, P" $focused><ChromeLogo /><Profile>P</Profile></AppButton>
          <AppButton aria-label="Word" $open><WordIcon /></AppButton>
          <AppButton aria-label="Photos" $open><PhotosIcon /></AppButton>
        </Pinned>
        <Tray>
          <TrayIcons aria-label="Hidden icons">
            <svg width="14" height="8" viewBox="0 0 14 8" fill="none" stroke="#222" strokeWidth="1.200"><path d="M1.500 7L7 1.500 12.500 7" /></svg>
            <CloudErrorIcon />
          </TrayIcons>
          <Language><span>ENG</span><span>IN</span></Language>
          <TrayIcons aria-label="Network, volume and battery"><WifiIcon /><VolumeIcon /><BatteryIcon /></TrayIcons>
          <Clock><span>09:50</span><span>29-07-2024</span></Clock>
          <Count>19</Count>
        </Tray>
      </Taskbar>
    </Screen>
  );
}
